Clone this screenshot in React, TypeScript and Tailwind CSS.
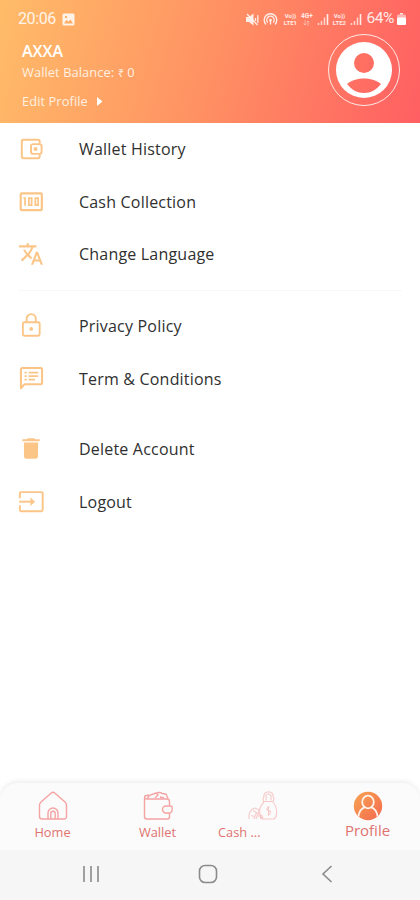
import type { ReactNode } from 'react'

interface MenuItem {
  label: string
  icon: ReactNode
}

const accountItems: MenuItem[] = [
  {
    label: 'Wallet History',
    icon: (
      <g fill="none" stroke="currentColor" strokeWidth={1.8}>
        <path d="M20 7V5a1.500 1.500 0 0 0-1.500-1.500H5A1.500 1.500 0 0 0 3.500 5v14A1.500 1.500 0 0 0 5 20.500h13.500A1.500 1.500 0 0 0 20 19v-2" />
        <rect x="12" y="7.500" width="9.800" height="9" rx="2" />
        <circle cx="16.200" cy="12" r="0.900" />
      </g>
    ),
  },
  {
    label: 'Cash Collection',
    icon: (
      <g fill="none" stroke="currentColor" strokeWidth={1.6}>
        <rect x="2.500" y="4" width="19.500" height="15.500" rx="1" strokeWidth={2} />
        <path d="M5 8.500h1.500v7M10 8.500h2.600v6.400H10zM16 8.500h2.600v6.400H16z" />
      </g>
    ),
  },
  {
    label: 'Change Language',
    icon: (
      <path
        fill="currentColor"
        d="M12.87 15.07l-2.54-2.51.03-.03c1.74-1.94 2.98-4.17 3.71-6.53H17V4h-7V2H8v2H1v1.99h11.17C11.5 7.92 10.44 9.75 9 11.35 8.07 10.32 7.3 9.19 6.69 8h-2c.73 1.63 1.73 3.17 2.98 4.56l-5.09 5.02L4 19l5-5 3.11 3.11.76-2.04zM18.5 10h-2L12 22h2l1.12-3h4.75L21 22h2l-4.5-12zm-2.62 7l1.62-4.33L19.12 17h-3.24z"
      />
    ),
  },
]

const legalItems: MenuItem[] = [
  {
    label: 'Privacy Policy',
    icon: (
      <g fill="none" stroke="currentColor" strokeWidth={1.7}>
        <rect x="4.500" y="8.500" width="15.500" height="12.500" rx="1.300" />
        <path d="M8 8.500V5.300a4.200 4.200 0 0 1 8.400 0v3.200" />
        <circle cx="12.200" cy="14.700" r="1.700" fill="currentColor" stroke="none" />
      </g>
    ),
  },
  {
    label: 'Term & Conditions',
    icon: (
      <g fill="none" stroke="currentColor" strokeWidth={1.6}>
        <path d="M2.700 20.500V2.900a1 1 0 0 1 1-1h17.500a1 1 0 0 1 1 1v13a1 1 0 0 1-1 1H6z" strokeWidth={1.9} strokeLinejoin="round" />
        <path d="M6 6.200h2M6 9.400h2M6 12.600h2M9.700 6.200h9M9.700 9.400h9M9.700 12.600h6" />
      </g>
    ),
  },
]

const sessionItems: MenuItem[] = [
  {
    label: 'Delete Account',
    icon: <path fill="currentColor" d="M5.500 18.800c0 1.200.9 2.200 2.100 2.200h8.800c1.200 0 2.100-1 2.100-2.200V6h-13zM20 3h-4l-1.200-1H9.200L8 3H4v1.800h16z" />,
  },
  {
    label: 'Logout',
    icon: (
      <g fill="none" stroke="currentColor" strokeWidth={1.8}>
        <path d="M1.700 8.500V4.200A1.300 1.300 0 0 1 3 2.900h18.500a1.300 1.300 0 0 1 1.300 1.300v15a1.300 1.300 0 0 1-1.300 1.300H3a1.300 1.300 0 0 1-1.300-1.300V15" />
        <path d="M1 11.700h12" />
        <path d="M11.500 7.800l4.200 3.900-4.200 3.900z" fill="currentColor" stroke="none" />
      </g>
    ),
  },
]

function MenuList({ items }: { items: MenuItem[] }) {
  return (
    <ul>
      {items.map((item) => (
        <li key={item.label} className="flex h-[52.6px] items-center gap-[35px] pl-[18px]">
          <svg className="h-[26px] w-[26px] text-[#fbc587]" viewBox="0 0 24 24">
            {item.icon}
          </svg>
          <span className="text-[16px] leading-6 tracking-[0.2px] text-[#303030]">{item.label}</span>
        </li>
      ))}
    </ul>
  )
}

function Signal() {
  return (
    <svg className="h-3 w-3" viewBox="0 0 12 12" fill="none" stroke="currentColor">
      <path d="M1.500 12v-2M4.500 12V8M7.500 12V4.500" strokeWidth={1.5} opacity={0.8} />
      <path d="M10.500 12V1" strokeWidth={1.6} />
    </svg>
  )
}

function VoLte({ line }: { line: string }) {
  return (
    <span className="flex w-[16px] flex-col items-center font-[Roboto] text-[6px] leading-[7.5px] font-bold">
      <span>Vo))</span>
      <span>{line}</span>
    </span>
  )
}

function StatusBar() {
  return (
    <div className="flex h-[38px] items-center justify-between pr-[14px] pl-[18px] text-white/85">
      <div className="flex items-center gap-[6px]">
        <span className="font-[Roboto] text-[16px] tracking-[-0.4px]">20:06</span>
        <svg className="h-[13px] w-[13px]" viewBox="0 0 13 13">
          <path
            fill="currentColor"
            fillRule="evenodd"
            d="M2 .500h9A1.500 1.500 0 0 1 12.500 2v9a1.500 1.500 0 0 1-1.500 1.500H2A1.500 1.500 0 0 1 .500 11V2A1.500 1.500 0 0 1 2 .500zM2 10.500h9L8.500 6.500l-2 2L4.500 7zM3 3v2h2V3z"
          />
        </svg>
      </div>
      <div className="flex items-center">
        <svg className="mr-[4px] h-[13px] w-[13px]" viewBox="0 0 13 13">
          <path fill="currentColor" d="M0 4h3l4.500-3.500v12L3 9H0z" />
          <path stroke="currentColor" strokeWidth={1.3} fill="none" d="M1 1l10.500 11M9.500 5v3M11.800 2v8" />
        </svg>
        <svg className="mr-[4px] h-[14px] w-[15px]" viewBox="0 0 15 14" fill="none" stroke="currentColor" strokeWidth={1.4}>
          <path d="M3 12.500a6.300 6.300 0 1 1 9 0M4.800 10.500a3.700 3.700 0 1 1 5.400 0" />
          <circle cx="7.500" cy="8" r="1.300" fill="currentColor" stroke="none" />
          <path d="M7.500 8v4.500" />
        </svg>
        <VoLte line="LTE1" />
        <span className="mr-[4px] ml-[2px] flex w-[13px] flex-col items-center font-[Roboto] text-[6.5px] leading-[8px] font-bold">
          <span>4G+</span>
          <svg className="h-[6px] w-[7px] opacity-60" viewBox="0 0 7 6" fill="none" stroke="currentColor">
            <path d="M2 0v5M.500 3.500L2 5l1.500-1.500M5 6V1M3.800 2.300L5 1l1.300 1.300" strokeWidth={0.8} />
          </svg>
        </span>
        <Signal />
        <span className="ml-[2px]">
          <VoLte line="LTE2" />
        </span>
        <span className="ml-[3px]">
          <Signal />
        </span>
        <span className="ml-[4px] font-[Roboto] text-[15.5px] tracking-[-0.4px]">64%</span>
        <svg className="ml-[3px] h-[12px] w-[9px]" viewBox="0 0 9 12">
          <path fill="currentColor" d="M3 0h3v1.500H3z" />
          <rect y="1.500" width="9" height="10.500" rx="1.500" fill="currentColor" opacity={0.6} />
          <rect y="4.500" width="9" height="7.500" rx="1.500" fill="white" />
        </svg>
      </div>
    </div>
  )
}

function ProfileHeader() {
  return (
    <header className="h-[123px] bg-linear-[105deg,#ffbc68_0%,#ff9163_50%,#ff5f62_100%] text-white">
      <StatusBar />
      <div className="flex justify-between pr-5 pl-[22px]">
        <div className="text-[#fff0e2]">
          <h1 className="mt-[3px] text-[16px] leading-5 font-semibold text-white">AXXA</h1>
          <p className="mt-[2px] text-[12.8px] leading-[19px] tracking-[0.1px]">
            Wallet Balance: <span className="text-[11px]">₹</span> 0
          </p>
          <button className="mt-[10px] flex items-center gap-[9px] text-[12.8px] leading-[19px] tracking-[0.1px]">
            Edit Profile
            <svg className="h-[9px] w-[6px]" viewBox="0 0 6 9" fill="white">
              <path d="M0 0l5.500 4.500L0 9z" />
            </svg>
          </button>
        </div>
        <div className="-mt-[4px] flex h-[72px] w-[72px] items-center justify-center rounded-full border border-white/85">
          <svg className="h-[58px] w-[58px]" viewBox="0 0 58 58">
            <path
              fill="white"
              fillRule="evenodd"
              d="M29 1a28 28 0 1 0 0 56 28 28 0 0 0 0-56zM29 12a10 10 0 1 1 0 20 10 10 0 0 1 0-20zM12 43c5-4 11-5.500 17-5.500s12 1.500 17 5.500c-5 6-10 9-17 9s-12-3-17-9z"
            />
          </svg>
        </div>
      </div>
    </header>
  )
}

function HomeIcon() {
  return (
    <svg className="h-[30px] w-[30px]" viewBox="0 0 30 30" fill="none" stroke="#f5a3a3" strokeWidth={1.4} strokeLinejoin="round">
      <path d="M1.500 14v11.500a2.500 2.500 0 0 0 2.500 2.500h22a2.500 2.500 0 0 0 2.500-2.500V14c0-1.500-.5-2-1.500-3L17 2.200a3 3 0 0 0-4 0L3 11c-1 1-1.500 1.500-1.500 3z" />
      <path d="M10 28v-6a5 5 0 0 1 10 0v6M12.800 28v-5.500a2.200 2.200 0 0 1 4.400 0V28" />
    </svg>
  )
}

function WalletIcon() {
  return (
    <svg className="h-[30px] w-[30px]" viewBox="0 0 30 30" fill="none" stroke="#f5a3a3" strokeWidth={1.4} strokeLinejoin="round">
      <path d="M26.500 15v-4.500A2.500 2.500 0 0 0 24 8H3.500C1 8 1 4.500 3.500 4.500L6 4M1.500 7v18.500A2.500 2.500 0 0 0 4 28h20.500a2 2 0 0 0 2-2v-4" />
      <path d="M4.500 7.500c1-3 3-4 6-4.500l2.500-1 2 2-3 3M13 2.500c2-1.500 5-1 6 0l4 .5 2 4.500M17 6l4 1" />
      <path d="M29 15.500l-2-.5h-4a3.500 3.500 0 0 0 0 7h4l1.500-1c.8-1.500.8-3.500.5-5.500z" />
    </svg>
  )
}

function CashIcon() {
  return (
    <svg className="h-[30px] w-[30px]" viewBox="0 0 30 30" fill="none" stroke="#f7caca" strokeWidth={1.1} strokeLinejoin="round">
      <path d="M15.500 10.500h9.500l1-2-1.500-6C22 .500 19 .500 16.500 2.500l-1.500 6zM16 11c-4 4-5 8-4 12l2 5h12c4-3 3.500-12-1.500-17.500" />
      <path d="M18 9.500v-5c1-2 4-2 5 0v5M21.500 16c-3 0-3.500 3-.8 3.600 2.800.5 2.300 4-.7 4M20.500 15v10" />
      <path d="M1 28v-4.500c1-3.500 3-5.500 5.500-6.500l4 1.500.5 3-3.500 2L6 28M5 19.500l4 2.500M9.500 23l4.500 1.500 1 3.500M3 24.500l3 1M8 28l1.500-3.500 3 1V28" />
    </svg>
  )
}

function ProfileIcon() {
  return (
    <svg className="h-[30px] w-[30px]" viewBox="0 0 30 30">
      <defs>
        <linearGradient id="profile-fill" x1="0" y1="0" x2="1" y2="1">
          <stop offset="0" stopColor="#f8a452" />
          <stop offset="1" stopColor="#f3694f" />
        </linearGradient>
      </defs>
      <circle cx="15" cy="15" r="14.200" fill="url(#profile-fill)" />
      <g fill="none" stroke="#fff3eb" strokeWidth={1.8}>
        <ellipse cx="15" cy="11" rx="5.800" ry="6.300" />
        <path d="M5.500 25.500c.5-5 3-8 6.500-9.300M24.500 25.500c-.5-5-3-8-6.500-9.300" />
      </g>
    </svg>
  )
}

function BottomNav() {
  return (
    <nav className="grid h-[67px] grid-cols-4 rounded-t-[18px] bg-[#fbfbfb] pt-[8px] text-[12.8px] leading-[18px] text-[#e07370] shadow-[0_-2px_5px_rgba(0,0,0,0.07)]">
      <div className="flex flex-col items-center gap-[2px]">
        <HomeIcon />
        Home
      </div>
      <div className="flex flex-col items-center gap-[2px]">
        <WalletIcon />
        Wallet
      </div>
      <div className="flex flex-col items-center gap-[2px]">
        <CashIcon />
        <span className="w-full pl-[8px]">Cash ...</span>
      </div>
      <div className="flex flex-col items-center text-[15px]">
        <ProfileIcon />
        Profile
      </div>
    </nav>
  )
}

function SystemNav() {
  return (
    <div className="flex h-[50px] items-center bg-[#f6f6f6] pb-[2px] pl-[82px] text-[#8b8b8b]">
      <svg className="h-[18px] w-[18px]" viewBox="0 0 18 18" fill="none" stroke="currentColor" strokeWidth={1.6}>
        <path d="M2 1v16M9 1v16M16 1v16" />
      </svg>
      <svg className="ml-[98px] h-[20px] w-[20px]" viewBox="0 0 20 20" fill="none" stroke="currentColor" strokeWidth={1.6}>
        <rect x="1.500" y="1.500" width="17" height="17" rx="5.500" />
      </svg>
      <svg className="ml-[103px] h-[20px] w-[12px]" viewBox="0 0 12 20" fill="none" stroke="currentColor" strokeWidth={1.6}>
        <path d="M10.500 2L2 10l8.500 8" />
      </svg>
    </div>
  )
}

export default function App() {
  return (
    <div className="flex h-[900px] w-[420px] flex-col overflow-hidden bg-white font-['Open_Sans',sans-serif]">
      <ProfileHeader />
      <main className="flex-1">
        <MenuList items={accountItems} />
        <hr className="mx-[18px] my-[9px] h-px border-0 bg-[#f8f8f8]" />
        <MenuList items={legalItems} />
        <div className="h-[18px]" />
        <MenuList items={sessionItems} />
      </main>
      <BottomNav />
      <SystemNav />
    </div>
  )
}
